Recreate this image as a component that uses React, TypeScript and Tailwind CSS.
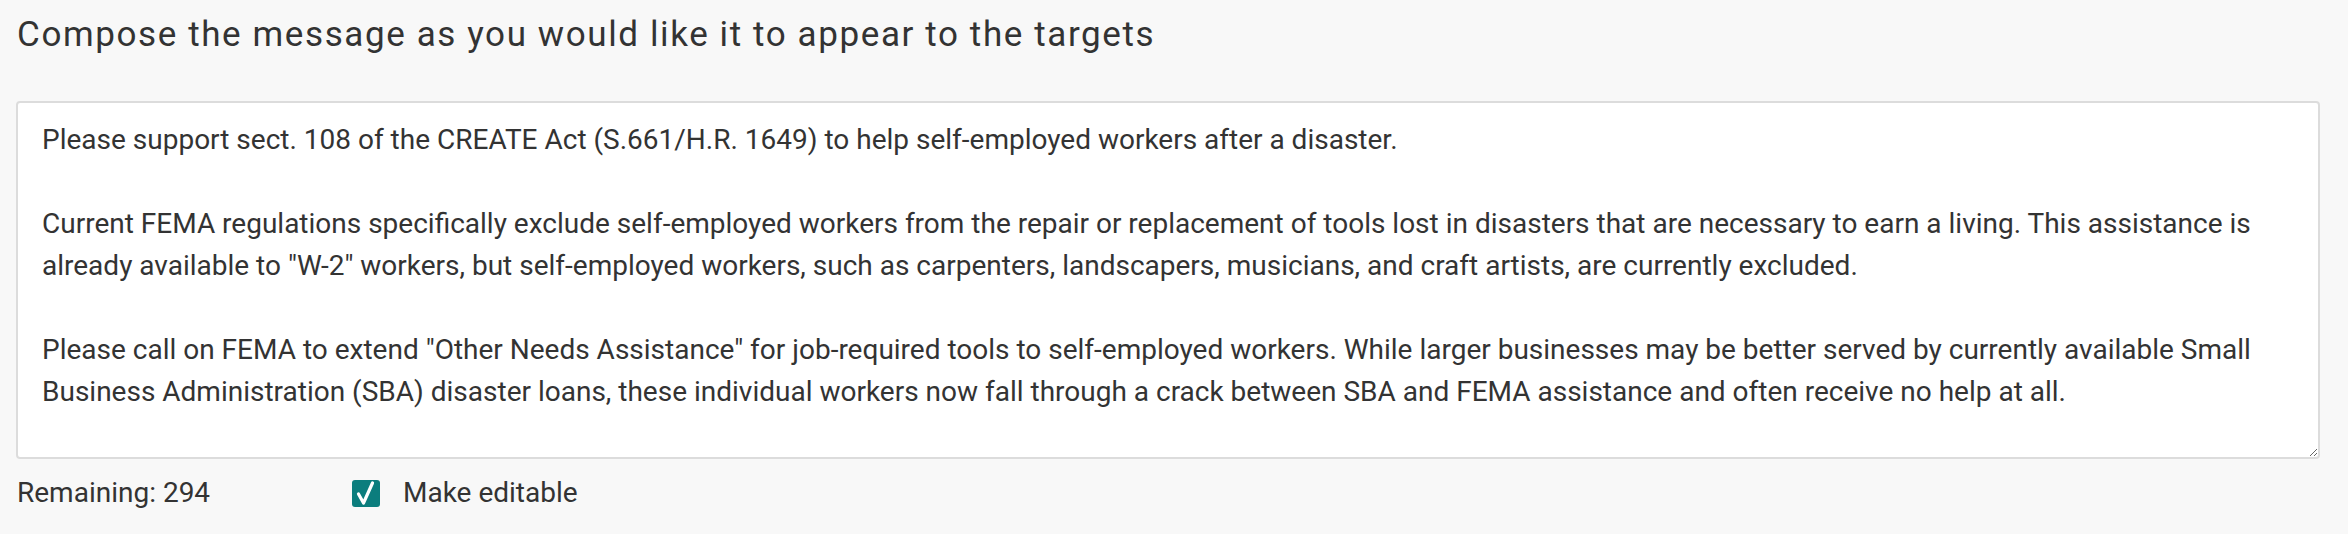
import { useState } from "react";

const MESSAGE = [
  "Please support sect. 108 of the CREATE Act (S.661/H.R. 1649) to help self-employed workers after a disaster.",
  "",
  "Current FEMA regulations specifically exclude self-employed workers from the repair or replacement of tools lost in disasters that are necessary to earn a living. This assistance is",
  'already available to "W-2" workers, but self-employed workers, such as carpenters, landscapers, musicians, and craft artists, are currently excluded.',
  "",
  'Please call on FEMA to extend "Other Needs Assistance" for job-required tools to self-employed workers. While larger businesses may be better served by currently available Small',
  "Business Administration (SBA) disaster loans, these individual workers now fall through a crack between SBA and FEMA assistance and often receive no help at all.",
].join("\n");

export default function App() {
  const [text, setText] = useState(MESSAGE);
  const [editable, setEditable] = useState(true);

  return (
    <div className="min-h-screen bg-[#f8f8f8] pl-[16px] pr-[28px] pt-[12px] font-['Roboto',_'Liberation_Sans',_sans-serif] text-[#333]">
      <h2 className="text-[35px] leading-[46px] tracking-[1.6px] pl-[1px]">
        Compose the message as you would like it to appear to the targets
      </h2>

      <textarea
        value={text}
        onChange={(e) => setText(e.target.value)}
        readOnly={!editable}
        wrap="off"
        spellCheck={false}
        className="mt-[43px] block h-[358px] w-full overflow-hidden rounded-[4px] border-2 border-[#dcdcdc] bg-white px-[24px] pt-[16px] text-[28px] leading-[42px] text-[#333] outline-none"
      />

      <div className="mt-[14px] flex items-center text-[28px] leading-[40px]">
        <span className="w-[336px] pl-[1px]">Remaining: {294}</span>
        <label className="flex cursor-pointer items-center gap-[23px]">
          <input
            type="checkbox"
            checked={editable}
            onChange={(e) => setEditable(e.target.checked)}
            className="sr-only"
          />
          <span className="flex h-[27px] w-[28px] items-center justify-center rounded-[3px] bg-[#0b7d7d]">
            {editable && (
              <svg width="28" height="27" viewBox="0 0 28 27" fill="none">
                <path d="M6.5 14 L11.5 23 L20.5 3" stroke="white" strokeWidth="3.2" strokeLinecap="round" strokeLinejoin="round" />
              </svg>
            )}
          </span>
          <span>Make editable</span>
        </label>
      </div>
    </div>
  );
}
